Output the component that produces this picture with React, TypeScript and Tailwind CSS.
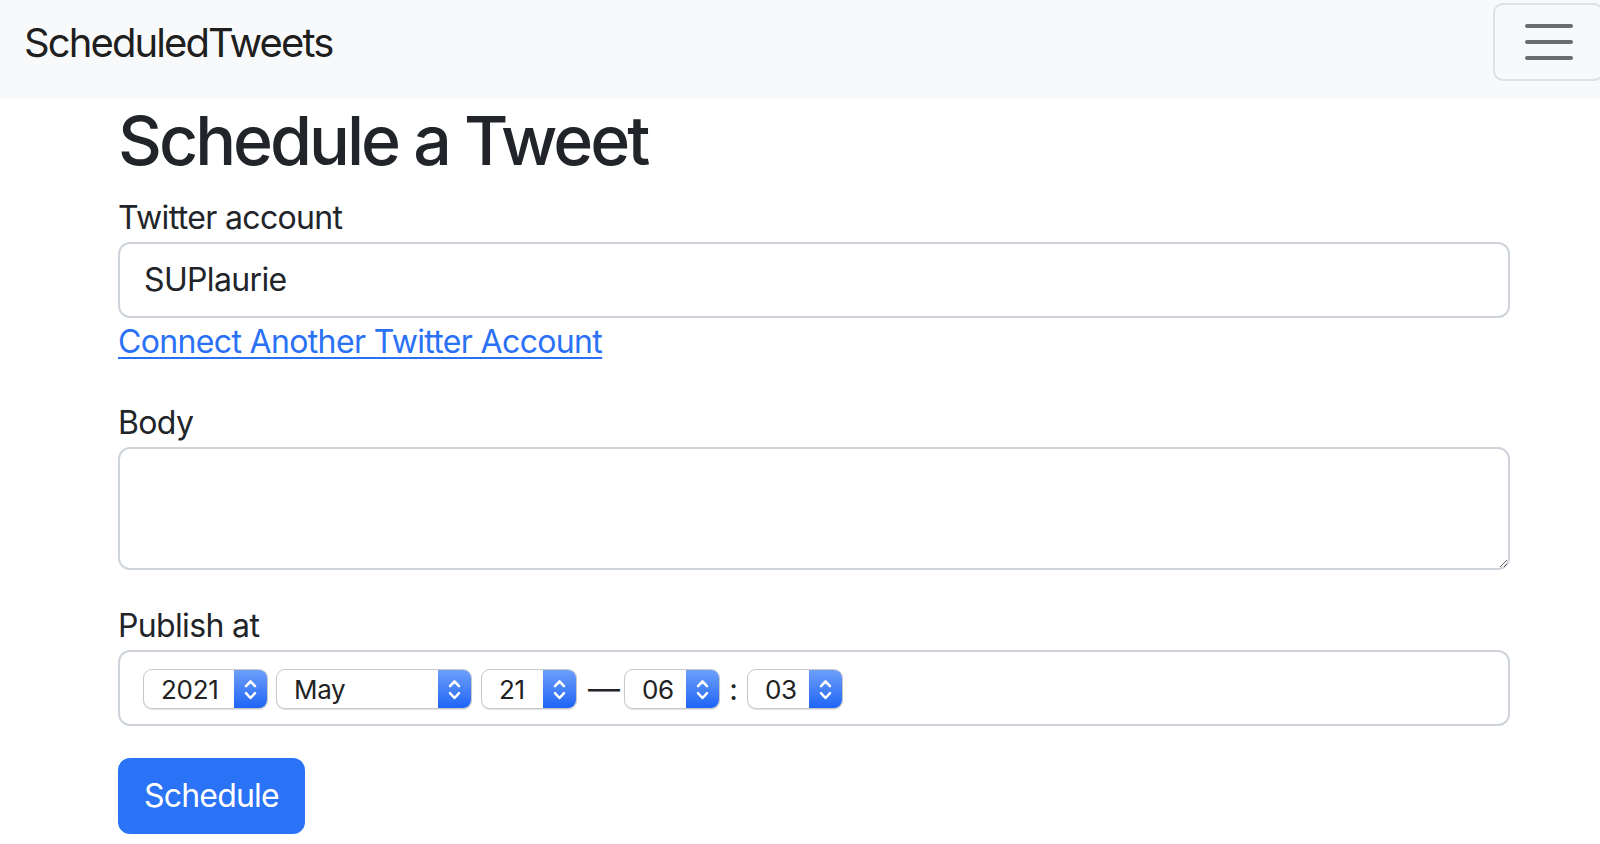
import React from 'react';

const font = { fontFamily: 'Inter, "Noto Sans", sans-serif' };

function Spinner() {
  return (
    <div className="w-[33px] h-full bg-gradient-to-b from-[#6d9ef9] to-[#1d63f5] flex items-center justify-center">
      <svg width="33" height="40" viewBox="0 0 33 40" fill="none" stroke="white" strokeWidth="2.5" strokeLinecap="round" strokeLinejoin="round">
        <path d="M12 17.2 L16.5 12.4 L21 17.2" />
        <path d="M12 24.2 L16.5 29 L21 24.2" />
      </svg>
    </div>
  );
}

function FakeSelect({ value, width, className = '' }: { value: string; width: string; className?: string }) {
  return (
    <div
      className={`${width} ${className} h-[40px] flex rounded-[9px] overflow-hidden border border-[#c9c9c9] bg-white shadow-[0_1px_1px_rgba(0,0,0,0.12)]`}
    >
      <div className="flex-1 flex items-center pl-[17px] text-[26px] text-[#222] tracking-[-0.3px]">{value}</div>
      <Spinner />
    </div>
  );
}

export default function App() {
  return (
    <div className="min-h-screen bg-white text-[#212529]" style={font}>
      {/* Navbar */}
      <nav className="h-[98px] bg-[#f8f9fa] flex items-start justify-between pl-[24px] overflow-hidden">
        <a className="mt-[13px] text-[40px] leading-[60px] text-[rgba(0,0,0,0.9)] tracking-[-1.9px]">ScheduledTweets</a>
        <button className="mt-[3px] -mr-[4px] w-[111px] h-[78px] border-2 border-[#dfe0e1] rounded-[10px] flex flex-col items-center justify-center gap-[12px]">
          <span className="block w-[48px] h-[4px] rounded-full bg-[#6c6d6f]" />
          <span className="block w-[48px] h-[4px] rounded-full bg-[#6c6d6f]" />
          <span className="block w-[48px] h-[4px] rounded-full bg-[#6c6d6f]" />
        </button>
      </nav>

      {/* Form */}
      <main className="ml-[118px] w-[1392px] pt-[2px]">
        <h1 className="text-[68px] leading-[81.6px] font-medium tracking-[-3px] mb-[12px]">Schedule a Tweet</h1>

        <label className="block text-[32px] leading-[48px] tracking-[-0.65px]">Twitter account</label>
        <div className="h-[76px] border-2 border-[#ced4da] rounded-[12px] px-[24px] flex items-center text-[32px] tracking-[-0.65px]">
          SUPlaurie
        </div>
        <div className="mb-[33px]">
          <a className="text-[32px] leading-[48px] text-[#2a71f6] underline underline-offset-[4px] decoration-2 tracking-[-0.65px]">
            Connect Another Twitter Account
          </a>
        </div>

        <label className="block text-[32px] leading-[48px] tracking-[-0.65px]">Body</label>
        <textarea className="block w-full h-[123px] border-2 border-[#ced4da] rounded-[12px] px-[24px] py-[12px] text-[32px] resize-y outline-none mb-[32px]" />

        <label className="block text-[32px] leading-[48px] tracking-[-0.65px]">Publish at</label>
        <div className="h-[76px] border-2 border-[#ced4da] rounded-[12px] pl-[23px] pt-[3px] flex items-center mb-[32px]">
          <FakeSelect value="2021" width="w-[125px]" />
          <FakeSelect value="May" width="w-[196px]" className="ml-[8px]" />
          <FakeSelect value="21" width="w-[96px]" className="ml-[9px]" />
          <span className="ml-[11px] mr-[6px] w-[30px] text-[32px] leading-none text-center">—</span>
          <FakeSelect value="06" width="w-[96px]" />
          <span className="w-[27px] text-[30px] leading-none text-center">:</span>
          <FakeSelect value="03" width="w-[96px]" />
        </div>

        <button className="h-[76px] px-[24px] rounded-[12px] border-2 border-[#2a72f6] bg-[#2a72f6] text-white text-[32px] tracking-[-0.8px]">
          Schedule
        </button>
      </main>
    </div>
  );
}
